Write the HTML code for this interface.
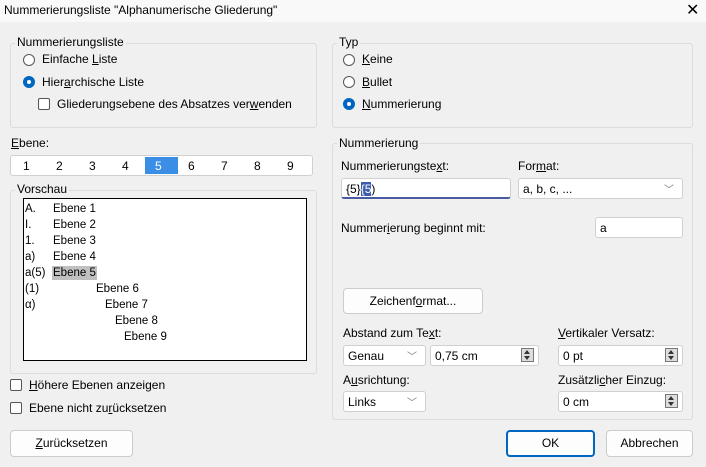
<!DOCTYPE html><html><head><style>
body{margin:0;width:706px;height:467px;background:#f0f0f0;font-family:"Liberation Sans",sans-serif;font-size:12px;color:#000;position:relative;overflow:hidden}
.a{position:absolute;white-space:nowrap}
.g{position:absolute;border:1px solid #dcdcdc;border-radius:3px}
.lg{position:absolute;background:#f0f0f0;padding:0 2px;white-space:nowrap}
.r{position:absolute;width:12px;height:12px;border:1px solid #555;border-radius:50%;background:#fff;box-sizing:border-box}
.r.on{border:4px solid #0067c0}
.c{position:absolute;width:12px;height:12px;border:1px solid #555;border-radius:2px;background:#fff;box-sizing:border-box}
.in{position:absolute;background:#fff;border:1px solid #d0d0d0;border-radius:3px;box-sizing:border-box;padding:3px 4px;white-space:nowrap}
.btn{position:absolute;background:#fdfdfd;border:1px solid #ccc;border-radius:4px;box-sizing:border-box;text-align:center;line-height:24px}
.dd{position:absolute;right:8px;top:2px;color:#777;font-size:10px}
.sp{position:absolute;right:4px;top:2px;width:13px;height:14px;border:1px solid #777;box-sizing:border-box;background:#ddd}
.sp:before{content:"";position:absolute;left:2px;top:1px;border:3.5px solid transparent;border-bottom:4px solid #333;border-top:0}
.sp:after{content:"";position:absolute;left:2px;top:7px;border:3.5px solid transparent;border-top:4px solid #333;border-bottom:0}
u{text-decoration:underline}
.p{position:absolute;white-space:nowrap;font-size:11.5px}
</style></head><body>
<div class="a" style="left:0;top:0;width:706px;height:22px;background:#f9f9f9"></div>
<div class="a" style="left:4px;top:3px">Nummerierungsliste "Alphanumerische Gliederung"</div>
<div class="a" style="left:686px;top:0px;font-size:16px">✕</div>

<div class="g" style="left:10px;top:43px;width:305px;height:83px"></div>
<div class="lg" style="left:15px;top:35px">Nummerierungsliste</div>
<div class="r" style="left:23px;top:54px"></div><div class="a" style="left:42px;top:52px">Einfache <u>L</u>iste</div>
<div class="r on" style="left:23px;top:76px"></div><div class="a" style="left:42px;top:75px">Hier<u>a</u>rchische Liste</div>
<div class="c" style="left:38px;top:98px"></div><div class="a" style="left:57px;top:97px">Gliederungsebene des Absatzes ver<u>w</u>enden</div>

<div class="a" style="left:11px;top:136px"><u>E</u>bene:</div>
<div class="a" style="left:10px;top:155px;width:301px;height:19px;background:#fff;border:1px solid #d0d0d0;border-radius:3px"></div>
<div class="a" style="left:145px;top:157px;width:33px;height:17px;background:#3a8ee6"></div>
<div class="a" style="left:23px;top:159px">1</div><div class="a" style="left:56px;top:159px">2</div><div class="a" style="left:89px;top:159px">3</div><div class="a" style="left:122px;top:159px">4</div><div class="a" style="left:155px;top:159px;color:#fff">5</div><div class="a" style="left:188px;top:159px">6</div><div class="a" style="left:221px;top:159px">7</div><div class="a" style="left:254px;top:159px">8</div><div class="a" style="left:287px;top:159px">9</div>

<div class="g" style="left:10px;top:190px;width:305px;height:182px"></div>
<div class="lg" style="left:15px;top:182px">Vorschau</div>
<div class="a" style="left:23px;top:198px;width:282px;height:161px;background:#fff;border:1px solid #000"></div>
<div class="p" style="left:25px;top:203px">A.</div><div class="p" style="left:53px;top:203px">Ebene 1</div>
<div class="p" style="left:25px;top:219px">I.</div><div class="p" style="left:53px;top:219px">Ebene 2</div>
<div class="p" style="left:25px;top:235px">1.</div><div class="p" style="left:53px;top:235px">Ebene 3</div>
<div class="p" style="left:25px;top:251px">a)</div><div class="p" style="left:53px;top:251px">Ebene 4</div>
<div class="p" style="left:25px;top:267px">a(5)</div><div class="p" style="left:52px;top:266px;background:#c0c0c0;padding:1px 1px">Ebene 5</div>
<div class="p" style="left:25px;top:283px">(1)</div><div class="p" style="left:96px;top:283px">Ebene 6</div>
<div class="p" style="left:25px;top:299px">α)</div><div class="p" style="left:105px;top:299px">Ebene 7</div>
<div class="p" style="left:115px;top:315px">Ebene 8</div>
<div class="p" style="left:124px;top:331px">Ebene 9</div>

<div class="c" style="left:10px;top:379px"></div><div class="a" style="left:29px;top:378px"><u>H</u>öhere Ebenen anzeigen</div>
<div class="c" style="left:10px;top:402px"></div><div class="a" style="left:29px;top:401px">Ebene nicht zu<u>r</u>ücksetzen</div>

<div class="g" style="left:332px;top:43px;width:359px;height:83px"></div>
<div class="lg" style="left:337px;top:35px">Typ</div>
<div class="r" style="left:343px;top:54px"></div><div class="a" style="left:362px;top:52px"><u>K</u>eine</div>
<div class="r" style="left:343px;top:76px"></div><div class="a" style="left:362px;top:75px"><u>B</u>ullet</div>
<div class="r on" style="left:343px;top:98px"></div><div class="a" style="left:362px;top:97px"><u>N</u>ummerierung</div>

<div class="g" style="left:332px;top:143px;width:359px;height:275px"></div>
<div class="lg" style="left:337px;top:136px">Nummerierung</div>
<div class="a" style="left:341px;top:159px">Nummerierungste<u>x</u>t:</div>
<div class="in" style="left:341px;top:178px;width:170px;height:21px;border-bottom:2px solid #4a5aa0">{5}<span style="background:#3a5cab;color:#fff">{5</span>)</div>
<div class="a" style="left:518px;top:159px">For<u>m</u>at:</div>
<div class="in" style="left:518px;top:178px;width:165px;height:21px">a, b, c, ...<span class="dd">﹀</span></div>
<div class="a" style="left:341px;top:221px">Nummer<u>i</u>erung beginnt mit:</div>
<div class="in" style="left:595px;top:217px;width:88px;height:21px">a</div>
<div class="btn" style="left:343px;top:288px;width:140px;height:26px">Zeichenf<u>o</u>rmat...</div>
<div class="a" style="left:343px;top:326px">Abstand zum Te<u>x</u>t:</div>
<div class="in" style="left:343px;top:345px;width:83px;height:21px">Genau<span class="dd">﹀</span></div>
<div class="in" style="left:430px;top:345px;width:109px;height:21px">0,75 cm<span class="sp"></span></div>
<div class="a" style="left:558px;top:326px"><u>V</u>ertikaler Versatz:</div>
<div class="in" style="left:558px;top:345px;width:125px;height:21px">0 pt<span class="sp"></span></div>
<div class="a" style="left:343px;top:373px">A<u>u</u>srichtung:</div>
<div class="in" style="left:343px;top:391px;width:83px;height:21px">Links<span class="dd">﹀</span></div>
<div class="a" style="left:558px;top:373px">Zusätzli<u>c</u>her Einzug:</div>
<div class="in" style="left:558px;top:391px;width:125px;height:21px">0 cm<span class="sp"></span></div>

<div class="btn" style="left:10px;top:430px;width:123px;height:27px"><u>Z</u>urücksetzen</div>
<div class="btn" style="left:506px;top:430px;width:89px;height:27px;border:2px solid #0067c0;line-height:23px">OK</div>
<div class="btn" style="left:606px;top:430px;width:87px;height:27px">Abbrechen</div>
</body></html>
